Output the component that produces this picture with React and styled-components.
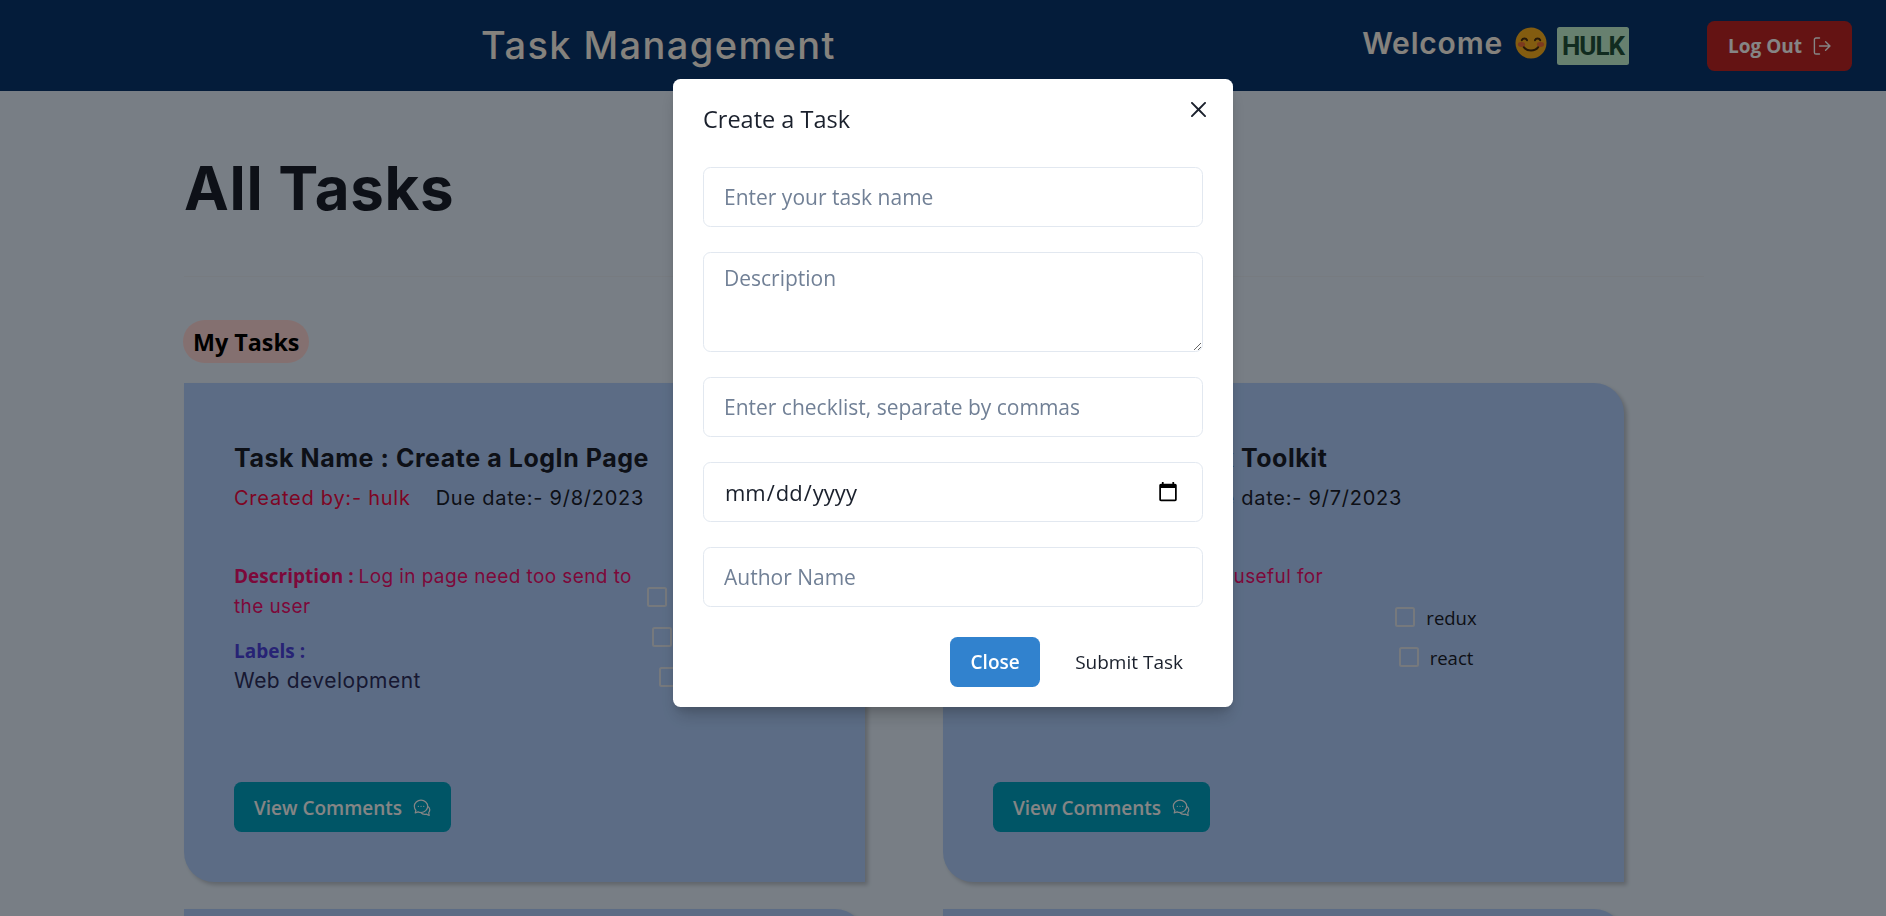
import styled, { createGlobalStyle } from "styled-components";

const tasks = [
  {
    id: 1,
    name: "Create a LogIn Page",
    author: "hulk",
    due: "9/8/2023",
    description: "Log in page need too send to the user",
    labels: "Web development",
    checklist: ["forms", "login", "css"],
    descWidth: 406,
  },
  {
    id: 2,
    name: "Redux Toolkit",
    author: "hulk",
    due: "9/7/2023",
    description: "Redux Kit is useful for",
    labels: "Web development",
    checklist: ["redux", "react"],
    descWidth: 384,
  },
  {
    id: 3,
    name: "Build a Dashboard",
    author: "hulk",
    due: "9/10/2023",
    description: "Show the tasks of the user",
    labels: "Web development",
    checklist: ["charts"],
    descWidth: 406,
  },
  {
    id: 4,
    name: "Write Unit Tests",
    author: "hulk",
    due: "9/12/2023",
    description: "Cover the task reducers",
    labels: "Testing",
    checklist: ["jest"],
    descWidth: 384,
  },
];

const LogoutIcon = () => (
  <svg width="18" height="18" viewBox="0 0 18 18" fill="none" stroke="currentColor" strokeWidth="1.4" strokeLinecap="round" strokeLinejoin="round">
    <path d="M6.500 1H3a1.600 1.600 0 0 0-1.600 1.600v12.800A1.600 1.600 0 0 0 3 17h3.500" />
    <path d="M6.500 9H17M12.600 4.800 17 9l-4.400 4.200" />
  </svg>
);

const ChatIcon = () => (
  <svg width="18" height="18" viewBox="0 0 18 18" fill="none" stroke="currentColor" strokeWidth="1.2" strokeLinecap="round" strokeLinejoin="round">
    <path d="M8 1.200c-3.700 0-6.700 2.700-6.700 6.100 0 1.500.6 2.900 1.600 4l-.7 2.600 2.900-1c.9.4 1.900.6 2.900.6 3.700 0 6.700-2.800 6.700-6.200S11.700 1.200 8 1.200Z" />
    <path d="M14.900 7.400c1.200.8 1.900 2 1.900 3.400 0 1-.4 2-1.100 2.800l.5 2.900-2.900-1.400c-2 .5-4.200-.1-5.500-1.600" />
    <path d="M5.300 7.300h.1M8 7.300h.1M10.700 7.300h.1" />
  </svg>
);

const SmileEmoji = () => (
  <svg width="32" height="32" viewBox="0 0 32 32">
    <circle cx="16" cy="16" r="15.500" fill="#fbb11f" />
    <ellipse cx="6.500" cy="17.500" rx="3.600" ry="2.400" fill="#f0703a" />
    <ellipse cx="25.500" cy="17.500" rx="3.600" ry="2.400" fill="#f0703a" />
    <g fill="none" stroke="#4a2f12" strokeWidth="2" strokeLinecap="round">
      <path d="M6.800 13.200c.9-2.300 4.300-2.300 5.200 0M20 13.200c.9-2.300 4.300-2.300 5.200 0" />
      <path d="M8.800 20.200c3.200 4.400 11.200 4.400 14.400 0" />
    </g>
  </svg>
);

const CloseIcon = () => (
  <svg width="15" height="15" viewBox="0 0 24 24" fill="#1a202c">
    <path d="M.439,21.44a1.5,1.5,0,0,0,2.122,2.121L11.823,14.3a.25.25,0,0,1,.354,0l9.262,9.263a1.5,1.5,0,1,0,2.122-2.121L14.3,12.177a.25.25,0,0,1,0-.354l9.263-9.262A1.5,1.5,0,0,0,21.439.44L12.177,9.7a.25.25,0,0,1-.354,0L2.561.44A1.5,1.5,0,0,0,.439,2.561L9.7,11.823a.25.25,0,0,1,0,.354Z" />
  </svg>
);

const TaskCard = ({ task }) => (
  <Card>
    <TaskTitle>Task Name : {task.name}</TaskTitle>
    <Meta>
      <CreatedBy>Created by:- {task.author}</CreatedBy>
      <DueDate>Due date:- {task.due}</DueDate>
    </Meta>
    <Body>
      <Details $width={task.descWidth}>
        <Description>
          <b>Description : </b>
          {task.description}
        </Description>
        <LabelsTitle>Labels :</LabelsTitle>
        <LabelsText>{task.labels}</LabelsText>
      </Details>
      <Checklist>
        {task.checklist.map((item) => (
          <CheckRow key={item}>
            <CheckBox />
            {item}
          </CheckRow>
        ))}
      </Checklist>
    </Body>
    <CommentsButton>
      View Comments
      <ChatIcon />
    </CommentsButton>
  </Card>
);

export default function App() {
  return (
    <Page>
      <GlobalStyle />
      <Header>
        <Brand>Task Management</Brand>
        <Welcome>
          <WelcomeText>Welcome</WelcomeText>
          <SmileEmoji />
          <UserBadge>HULK</UserBadge>
        </Welcome>
        <LogoutButton>
          Log Out
          <LogoutIcon />
        </LogoutButton>
      </Header>
      <Main>
        <Heading>All Tasks</Heading>
        <Divider />
        <SectionPill>My Tasks</SectionPill>
        <CardGrid>
          {tasks.map((task) => (
            <TaskCard key={task.id} task={task} />
          ))}
        </CardGrid>
      </Main>
      <Overlay>
        <Modal>
          <ModalClose>
            <CloseIcon />
          </ModalClose>
          <ModalTitle>Create a Task</ModalTitle>
          <ModalForm>
            <Input placeholder="Enter your task name" />
            <TextArea placeholder="Description" />
            <Input placeholder="Enter checklist, separate by commas" />
            <Input type="date" />
            <Input placeholder="Author Name" />
          </ModalForm>
          <ModalFooter>
            <PrimaryButton>Close</PrimaryButton>
            <GhostButton>Submit Task</GhostButton>
          </ModalFooter>
        </Modal>
      </Overlay>
    </Page>
  );
}

const poppins = `Inter, "Open Sans", sans-serif`;
const segoe = `"Open Sans", "Noto Sans", sans-serif`;

const GlobalStyle = createGlobalStyle`
  * {
    box-sizing: border-box;
  }
  body {
    margin: 0;
    font-family: ${segoe};
  }
  input::placeholder,
  textarea::placeholder {
    color: #718096;
  }
`;

const Page = styled.div`
  height: 100vh;
  overflow: hidden;
  background-color: #e6f2ff;
`;

const Header = styled.header`
  height: 91px;
  display: flex;
  align-items: center;
  padding: 0 34px 0 481px;
  background-color: #083670;
`;

const Brand = styled.div`
  margin-top: -2px;
  font-family: ${poppins};
  font-size: 38px;
  letter-spacing: 1.4px;
  font-weight: 500;
  color: #fff9f0;
`;

const Welcome = styled.div`
  margin-left: auto;
  height: 38px;
  margin-top: 1px;
  display: flex;
  align-items: flex-start;
  gap: 12px;
`;

const WelcomeText = styled.span`
  font-family: ${poppins};
  font-size: 30px;
  line-height: 32px;
  letter-spacing: 0.8px;
  font-weight: 600;
  color: #fff9f0;
`;

const UserBadge = styled.span`
  width: 72px;
  height: 38px;
  display: flex;
  align-items: center;
  justify-content: center;
  margin-left: -2px;
  border-radius: 2.500px;
  background-color: #c6f6d5;
  color: #22543d;
  font-family: Roboto, sans-serif;
  font-size: 26px;
  letter-spacing: -1px;
  font-weight: 700;
`;

const LogoutButton = styled.button`
  width: 145px;
  height: 50px;
  margin-left: 78px;
  display: flex;
  align-items: center;
  justify-content: center;
  gap: 11px;
  border: none;
  border-radius: 7.500px;
  background-color: #c02626;
  color: #fff;
  font-family: ${segoe};
  font-size: 19px;
  font-weight: 700;
`;

const Main = styled.main`
  padding: 0 182px 0 184px;
`;

const Heading = styled.h1`
  margin: 0;
  padding-top: 58px;
  height: 185px;
  font-family: ${poppins};
  font-size: 60px;
  line-height: 78px;
  letter-spacing: 0.7px;
  font-weight: 700;
  color: #1a202c;
`;

const Divider = styled.hr`
  margin: 0 0 43px;
  border: none;
  border-top: 1px solid rgba(226, 232, 240, 0.6);
`;

const SectionPill = styled.span`
  display: inline-block;
  height: 43px;
  padding: 0 10px;
  margin-left: -1px;
  border-radius: 22px;
  background-color: #fed7d7;
  color: #000;
  font-size: 23.300px;
  line-height: 44px;
  font-weight: 700;
`;

const CardGrid = styled.div`
  margin-top: 20px;
  display: grid;
  grid-template-columns: repeat(2, 681px);
  column-gap: 78px;
  row-gap: 27px;
`;

const Card = styled.article`
  height: 499px;
  display: flex;
  flex-direction: column;
  align-items: flex-start;
  padding: 58px 50px 50px;
  border-radius: 0 30px 0 30px;
  background-color: #b0d0ff;
  box-shadow: 3px 3px 4px rgba(0, 0, 0, 0.2);
`;

const TaskTitle = styled.h3`
  margin: 0;
  font-family: ${poppins};
  font-size: 25px;
  line-height: 34px;
  letter-spacing: 0.55px;
  font-weight: 700;
  color: #1a202c;
  white-space: nowrap;
`;

const Meta = styled.div`
  margin-top: 8px;
  display: flex;
  gap: 25px;
  font-family: ${poppins};
  font-size: 20px;
  line-height: 30px;
  letter-spacing: 0.75px;
  white-space: nowrap;
`;

const CreatedBy = styled.span`
  color: #f00a45;
`;

const DueDate = styled.span`
  color: #1a202c;
`;

const Body = styled.div`
  width: 502px;
  height: 184px;
  margin-top: 32px;
  display: flex;
`;

const Details = styled.div`
  flex: none;
  width: ${({ $width }) => $width}px;
  padding-top: 16px;
`;

const Description = styled.p`
  margin: 0;
  font-family: ${poppins};
  font-size: 19px;
  line-height: 30px;
  letter-spacing: 0.4px;
  color: #ee1070;

  b {
    font-family: ${segoe};
    font-weight: 700;
    letter-spacing: 0;
  }
`;

const LabelsTitle = styled.p`
  margin: 14px 0 0;
  font-size: 19px;
  line-height: 30px;
  font-weight: 700;
  color: #4c44e0;
`;

const LabelsText = styled.p`
  margin: 0;
  font-family: ${poppins};
  font-size: 21px;
  line-height: 30px;
  letter-spacing: 0.5px;
  color: #2d2f5f;
`;

const Checklist = styled.ul`
  flex: 1;
  margin: 0;
  padding: 0;
  list-style: none;
  display: flex;
  flex-direction: column;
  align-items: center;
  justify-content: center;
  gap: 20px;
`;

const CheckRow = styled.li`
  display: flex;
  align-items: center;
  gap: 11px;
  height: 20px;
  font-size: 18.500px;
  color: #1a202c;
  white-space: nowrap;
`;

const CheckBox = styled.span`
  width: 20px;
  height: 20px;
  border: 2px solid #e2e8f0;
  border-radius: 2.500px;
`;

const CommentsButton = styled.button`
  margin-top: 53px;
  height: 50px;
  width: 217px;
  padding: 2px 0 0;
  display: flex;
  align-items: center;
  justify-content: center;
  gap: 11px;
  border: none;
  border-radius: 7.500px;
  background-color: #00a3c4;
  color: #fff;
  font-family: ${segoe};
  font-size: 19px;
  font-weight: 600;
`;

const Overlay = styled.div`
  position: fixed;
  inset: 0;
  display: flex;
  justify-content: center;
  align-items: flex-start;
  padding: 79px 0 0 20px;
  background-color: rgba(0, 0, 0, 0.48);
`;

const Modal = styled.section`
  position: relative;
  width: 560px;
  display: flex;
  flex-direction: column;
  border-radius: 7.500px;
  background-color: #fff;
  box-shadow: 0 12px 18px -4px rgba(0, 0, 0, 0.2), 0 5px 7px -2px rgba(0, 0, 0, 0.1);
`;

const ModalClose = styled.button`
  position: absolute;
  top: 10px;
  right: 15px;
  width: 40px;
  height: 40px;
  display: flex;
  align-items: center;
  justify-content: center;
  border: none;
  background: none;
  padding: 0;
`;

const ModalTitle = styled.h2`
  margin: 0;
  padding: 20px 30px 28px;
  font-size: 23.500px;
  line-height: 40px;
  font-weight: 500;
  color: #1a202c;
`;

const ModalForm = styled.div`
  display: flex;
  flex-direction: column;
  gap: 25px;
  padding: 0 30px;
`;

const Input = styled.input`
  width: 100%;
  height: 60px;
  padding: 0 20px;
  border: 1px solid #e2e8f0;
  border-radius: 7.500px;
  font-family: ${segoe};
  font-size: 21px;
  color: #1a202c;
  background: #fff;

  &[type="date"] {
    font-size: 22px;
  }

  &::-webkit-calendar-picker-indicator {
    width: 22px;
    height: 22px;
    padding: 0;
    margin-right: 3px;
  }
`;

const TextArea = styled.textarea`
  display: block;
  width: 100%;
  height: 100px;
  padding: 10px 20px;
  border: 1px solid #e2e8f0;
  border-radius: 7.500px;
  font-family: ${segoe};
  font-size: 21px;
  line-height: 30px;
`;

const ModalFooter = styled.div`
  display: flex;
  justify-content: flex-end;
  gap: 15px;
  padding: 30px 30px 20px;
`;

const PrimaryButton = styled.button`
  height: 50px;
  width: 90px;
  border: none;
  border-radius: 7.500px;
  background-color: #3182ce;
  color: #fff;
  font-family: ${segoe};
  font-size: 19px;
  font-weight: 600;
`;

const GhostButton = styled.button`
  height: 50px;
  padding: 0 20px;
  border: none;
  border-radius: 7.500px;
  background: none;
  color: #1a202c;
  font-family: ${segoe};
  font-size: 19px;
  font-weight: 500;
`;
